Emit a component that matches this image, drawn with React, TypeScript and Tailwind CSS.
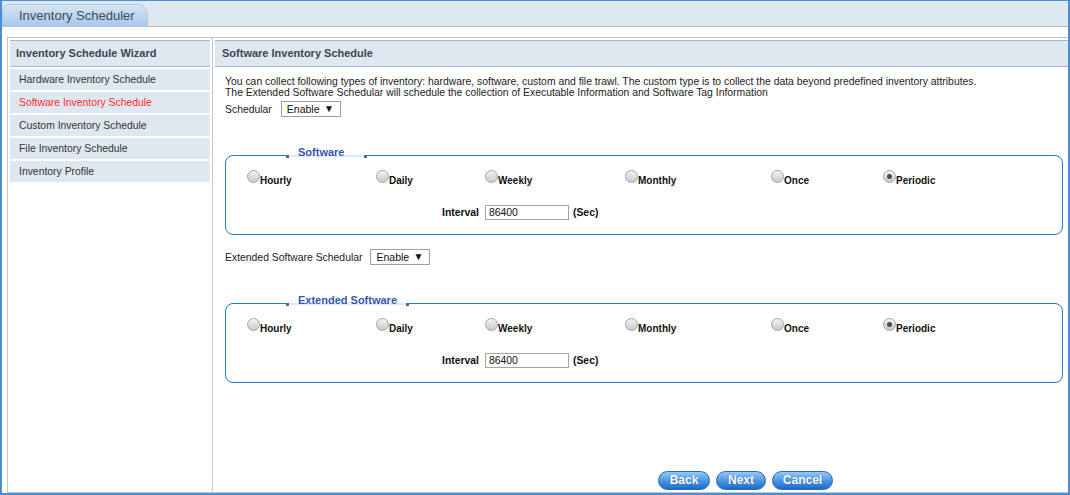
import React from "react";

const FONT = { fontFamily: '"Liberation Sans", Arial, sans-serif' };

const MENU = [
  "Hardware Inventory Schedule",
  "Software Inventory Schedule",
  "Custom Inventory Schedule",
  "File Inventory Schedule",
  "Inventory Profile",
];

const OPTIONS = [
  { label: "Hourly", w: "w-[129px]" },
  { label: "Daily", w: "w-[109px]" },
  { label: "Weekly", w: "w-[140px]" },
  { label: "Monthly", w: "w-[146px]" },
  { label: "Once", w: "w-[112px]" },
  { label: "Periodic", w: "w-[100px]" },
];

function Radio({ checked }: { checked?: boolean }) {
  return (
    <span className="flex items-center justify-center w-[13px] h-[13px] rounded-full border border-[#a3a3a3] bg-gradient-to-b from-[#f4f4f4] to-[#c9c9c9] shrink-0">
      {checked && <span className="w-[5px] h-[5px] rounded-full bg-[#4a4a4a]" />}
    </span>
  );
}

function Select() {
  return (
    <div className="flex items-center justify-between w-[60px] h-[16px] border border-[#a0a0a0] bg-white pl-[5px] pr-[6px] text-[10.5px] text-[#111]">
      <span>Enable</span>
      <span className="text-[10px] leading-[10px]">▼</span>
    </div>
  );
}

function ScheduleBox({ title, legendW, className }: { title: string; legendW: string; className?: string }) {
  return (
    <div className={`relative w-[838px] h-[80px] border border-[#1a7dc2] rounded-[8px] ${className ?? ""}`}>
      {/* legend over the top border */}
      <div className={`absolute left-[60px] -top-[10px] h-[13px] ${legendW} bg-white pl-[12px]`}>
        <span className="absolute left-[3px] right-[3px] top-[9px] h-[2px] bg-[#dceaf6]" />
        <span className="absolute left-0 top-[9px] w-[3px] h-[3px] bg-[#3f6ea8]" />
        <span className="absolute right-0 top-[9px] w-[3px] h-[3px] bg-[#3f6ea8]" />
        <span className="relative block text-[11px] leading-[13px] font-bold text-[#3656ae]">{title}</span>
      </div>

      <div className="flex items-start pl-[21px] pt-[14px]">
        {OPTIONS.map((o) => (
          <div key={o.label} className={`flex items-start ${o.w}`}>
            <Radio checked={o.label === "Periodic"} />
            <span className="mt-[5px] text-[10px] leading-[11px] font-bold text-[#111]">{o.label}</span>
          </div>
        ))}
      </div>

      <div className="flex items-center ml-[216px] mt-[19px] text-[10.4px] font-bold text-[#111]">
        <span className="mr-[6px]">Interval</span>
        <div className="w-[84px] h-[15px] border border-[#a5a5a5] pl-[3px] leading-[13px] font-normal">86400</div>
        <span className="ml-[4px]">(Sec)</span>
      </div>
    </div>
  );
}

function PillButton({ label, w }: { label: string; w: string }) {
  return (
    <button
      className={`${w} h-[19px] rounded-full border border-[#2366b9] bg-gradient-to-b from-[#93c8f5] via-[#4d98e2] to-[#1c6bcb] text-white text-[12px] font-bold leading-[17px] [text-shadow:0_0_1px_#1a4f90]`}
    >
      {label}
    </button>
  );
}

export default function App() {
  return (
    <div
      style={FONT}
      className="w-[1070px] h-[495px] flex flex-col border-t border-x-2 border-b-2 border-[#4d8dd5] bg-white overflow-hidden"
    >
      {/* tab strip */}
      <div className="h-[26px] shrink-0 flex items-end bg-[#dee8f1] border-b border-[#b7c0b2]">
        <div className="w-[146px] h-[23px] -mb-px rounded-tl-[7px] rounded-tr-[11px] border border-b-0 border-[#b3c9e2] bg-gradient-to-b from-[#d6e6f7] to-[#a6c6eb] pl-[16px] text-[13px] leading-[22px] text-[#3e4954]">
          Inventory Scheduler
        </div>
      </div>

      <div className="flex-1 flex flex-col pt-[10px] pl-[5px] min-h-0">
        <div className="flex-1 flex border border-r-0 border-[#c6c6c6] min-h-0">
          {/* wizard steps */}
          <div className="w-[205px] shrink-0 border-r border-[#c6c6c6] p-[2px]">
            <div className="h-[27px] border-y border-[#a3b8d4] bg-[#dfe8f1] pl-[6px] text-[11px] leading-[25px] font-bold text-[#3b4550]">
              Inventory Schedule Wizard
            </div>
            {MENU.map((m) => (
              <div
                key={m}
                className={`mt-[2px] h-[21px] bg-[#dfe8f1] pl-[9px] text-[10.4px] leading-[21px] ${
                  m === "Software Inventory Schedule" ? "text-[#ff2a2a]" : "text-[#333]"
                }`}
              >
                {m}
              </div>
            ))}
          </div>

          {/* schedule form */}
          <div className="flex-1 flex flex-col pt-[2px] pl-[2px] pb-[2px]">
            <div className="h-[27px] shrink-0 border-y border-[#a3b8d4] bg-[#dfe8f1] pl-[7px] text-[11px] leading-[25px] font-bold text-[#3b4550]">
              Software Inventory Schedule
            </div>

            <div className="pl-[10px] pt-[9px] text-[10.4px] leading-[11px] text-[#222]">
              <p>
                You can collect following types of inventory: hardware, software, custom and file trawl. The custom type is to collect the data beyond predefined inventory attributes.
              </p>
              <p>The Extended Software Schedular will schedule the collection of Executable Information and Software Tag Information</p>

              <div className="flex items-center mt-[3px]">
                <span className="mr-[9px]">Schedular</span>
                <Select />
              </div>

              <ScheduleBox title="Software" legendW="w-[81px]" className="mt-[38px]" />

              <div className="flex items-center mt-[14px]">
                <span className="mr-[8px]">Extended Software Schedular</span>
                <Select />
              </div>

              <ScheduleBox title="Extended Software" legendW="w-[123px]" className="mt-[38px]" />
            </div>

            <div className="mt-auto flex gap-[6px] pl-[443px]">
              <PillButton label="Back" w="w-[52px]" />
              <PillButton label="Next" w="w-[50px]" />
              <PillButton label="Cancel" w="w-[61px]" />
            </div>
          </div>
        </div>
      </div>
    </div>
  );
}
